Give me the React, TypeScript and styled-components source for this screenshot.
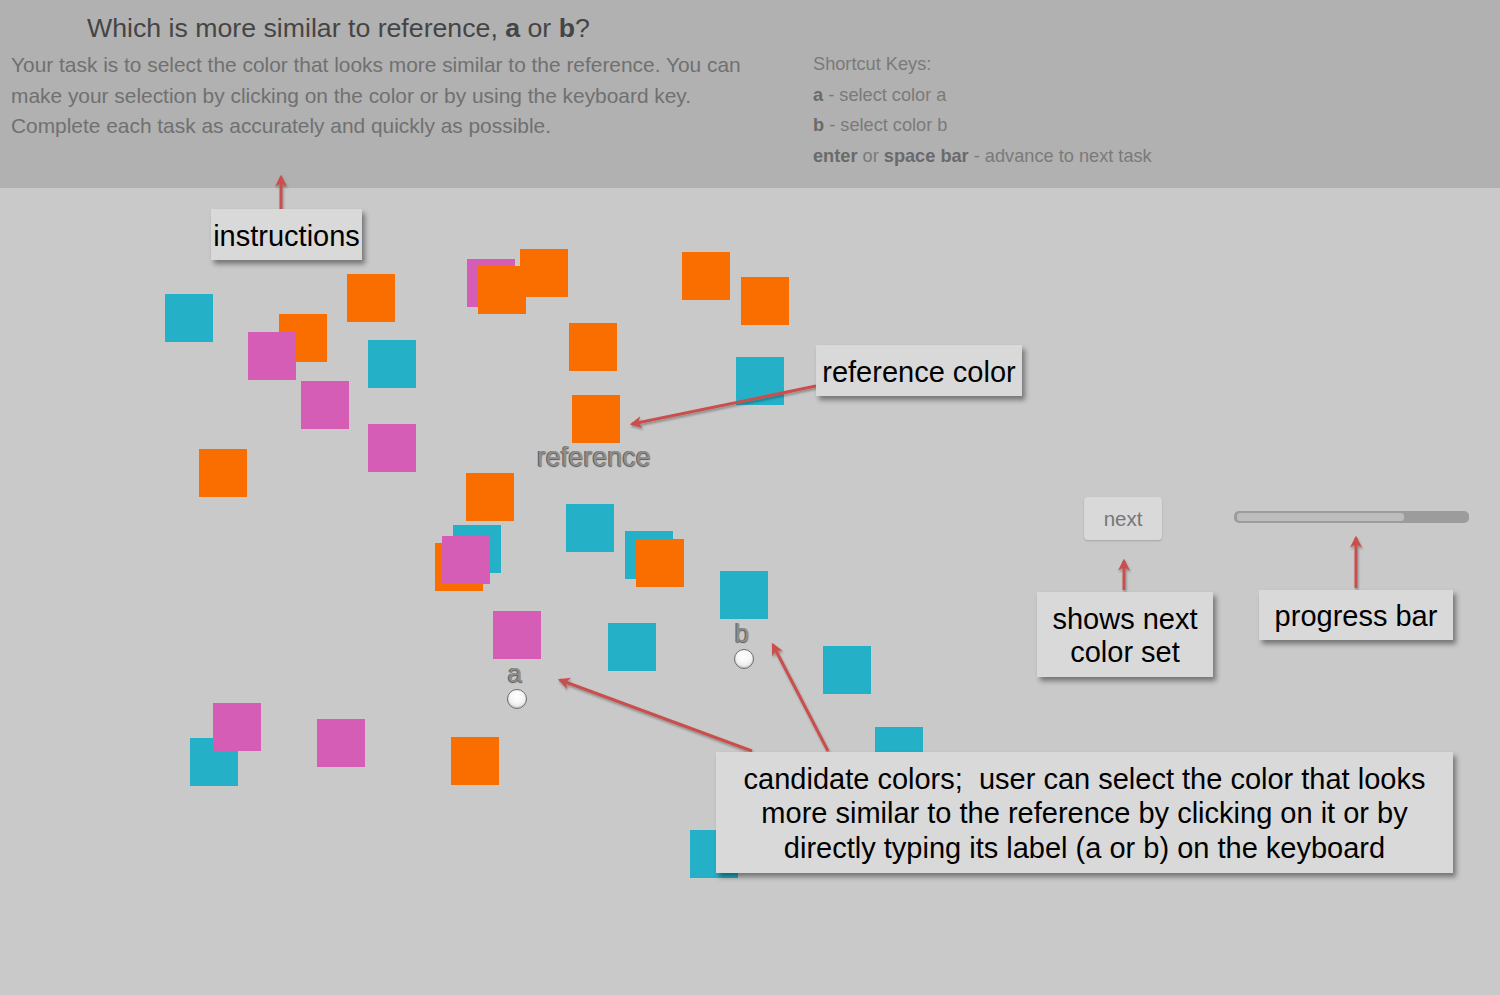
import React from "react";
import styled, { createGlobalStyle } from "styled-components";

const HEADER_H = 188;

const ORANGE = "#fa6e00";
const TEAL = "#24b1c7";
const PINK = "#d65db6";

type Sq = { x: number; y: number; c: string };

const squares: Sq[] = [
  { x: 165, y: 294, c: TEAL },
  { x: 279, y: 314, c: ORANGE },
  { x: 248, y: 332, c: PINK },
  { x: 347, y: 274, c: ORANGE },
  { x: 368, y: 340, c: TEAL },
  { x: 301, y: 381, c: PINK },
  { x: 368, y: 424, c: PINK },
  { x: 199, y: 449, c: ORANGE },
  { x: 467, y: 259, c: PINK },
  { x: 520, y: 249, c: ORANGE },
  { x: 478, y: 266, c: ORANGE },
  { x: 682, y: 252, c: ORANGE },
  { x: 741, y: 277, c: ORANGE },
  { x: 569, y: 323, c: ORANGE },
  { x: 736, y: 357, c: TEAL },
  { x: 466, y: 473, c: ORANGE },
  { x: 453, y: 525, c: TEAL },
  { x: 435, y: 543, c: ORANGE },
  { x: 442, y: 536, c: PINK },
  { x: 566, y: 504, c: TEAL },
  { x: 625, y: 531, c: TEAL },
  { x: 636, y: 539, c: ORANGE },
  { x: 608, y: 623, c: TEAL },
  { x: 823, y: 646, c: TEAL },
  { x: 190, y: 738, c: TEAL },
  { x: 213, y: 703, c: PINK },
  { x: 317, y: 719, c: PINK },
  { x: 451, y: 737, c: ORANGE },
  { x: 875, y: 727, c: TEAL },
  { x: 690, y: 830, c: TEAL },
];

type Choice = { x: number; y: number; c: string; label: string; size: number; radio: boolean };

const choices: Choice[] = [
  { x: 572, y: 395, c: ORANGE, label: "reference", size: 27, radio: false },
  { x: 493, y: 611, c: PINK, label: "a", size: 26, radio: true },
  { x: 720, y: 571, c: TEAL, label: "b", size: 26, radio: true },
];

const GlobalStyle = createGlobalStyle`
  html, body { margin: 0; padding: 0; background: #c9c9c9; }
  body { font-family: "Liberation Sans", Arial, Helvetica, sans-serif; }
`;

const Page = styled.div`
  position: relative;
  width: 1500px;
  height: 995px;
  overflow: hidden;
  background: #c9c9c9;
`;

const Header = styled.header`
  box-sizing: border-box;
  height: ${HEADER_H}px;
  background: #b1b1b1;
  display: flex;
  padding: 10px 0 0 11px;
`;

const Intro = styled.div`
  width: 802px;
  flex: none;
`;

const Title = styled.h1`
  margin: 0;
  padding-left: 76px;
  font-size: 26.7px;
  line-height: 36px;
  font-weight: normal;
  color: #454545;
  b { font-weight: bold; }
`;

const Description = styled.p`
  margin: 4px 0 0;
  font-size: 20.9px;
  line-height: 30.5px;
  color: #707070;
`;

const Shortcuts = styled.div`
  padding-top: 39px;
  font-size: 18.2px;
  line-height: 30.5px;
  color: #7a7a7a;
  b { font-weight: bold; color: #6a6a6a; }
`;

const ShortcutLine = styled.div``;

const Stage = styled.main`
  position: relative;
  height: ${995 - HEADER_H}px;
`;

const Square = styled.div<{ $c: string }>`
  position: absolute;
  width: 48px;
  height: 48px;
  background: ${(p) => p.$c};
`;

const ChoiceGroup = styled.div`
  position: absolute;
  width: 48px;
  display: flex;
  flex-direction: column;
  align-items: center;
`;

const Swatch = styled.div<{ $c: string }>`
  width: 48px;
  height: 48px;
  flex: none;
  background: ${(p) => p.$c};
`;

const ColorLabel = styled.div<{ $size: number }>`
  margin-top: 1px;
  margin-right: 4px;
  white-space: nowrap;
  font-size: ${(p) => p.$size}px;
  line-height: 1;
  color: #8e8e8e;
  text-shadow: -1px 0 0 #5c5c5c, 0 1px 1px #5a5a5a;
`;

const Radio = styled.span`
  box-sizing: border-box;
  width: 20px;
  height: 20px;
  margin-top: 3px;
  border-radius: 50%;
  border: 1px solid #6d6d6d;
  background: radial-gradient(circle at 50% 35%, #ffffff 0%, #f6f6f6 45%, #d4d4d4 100%);
  box-shadow: inset 0 -1px 1px rgba(0, 0, 0, 0.15);
`;

const Controls = styled.div`
  position: absolute;
  left: 1084px;
  top: ${497 - HEADER_H}px;
  display: flex;
  align-items: center;
  gap: 72px;
`;

const NextButton = styled.div`
  width: 78px;
  height: 43px;
  border-radius: 4px;
  background: #d9d9d9;
  box-shadow: 0 1px 2px rgba(0, 0, 0, 0.18);
  display: flex;
  align-items: center;
  justify-content: center;
  font-size: 20.5px;
  color: #767676;
`;

const Progress = styled.div`
  box-sizing: border-box;
  width: 235px;
  height: 12px;
  border-radius: 5px;
  background: #9c9c9c;
  padding: 2px 3px;
  margin-top: -3px;
`;

const ProgressFill = styled.div`
  height: 8px;
  border-radius: 3px;
  background: #bdbdbd;
`;

const Overlay = styled.div`
  position: absolute;
  inset: 0;
  pointer-events: none;
`;

const ArrowLayer = styled.svg`
  position: absolute;
  left: 0;
  top: 0;
`;

const Callout = styled.div<{ $x: number; $y: number; $w: number; $h: number; $lh?: number }>`
  position: absolute;
  left: ${(p) => p.$x}px;
  top: ${(p) => p.$y}px;
  width: ${(p) => p.$w}px;
  height: ${(p) => p.$h}px;
  box-sizing: border-box;
  padding-top: 2px;
  background: #d9d9d9;
  box-shadow: 3px 4px 5px rgba(0, 0, 0, 0.42);
  display: flex;
  align-items: center;
  justify-content: center;
  text-align: center;
  font-size: 29px;
  line-height: ${(p) => p.$lh ?? 34}px;
  color: #000;
  white-space: nowrap;
`;

const arrows: [number, number, number, number][] = [
  [281, 209, 281, 177],
  [816, 386, 632, 424],
  [1124, 590, 1124, 561],
  [1356, 588, 1356, 538],
  [752, 751, 560, 680],
  [828, 751, 773, 645],
];

export default function App() {
  return (
    <Page>
      <GlobalStyle />
      <Header>
        <Intro>
          <Title>
            Which is more similar to reference, <b>a</b> or <b>b</b>?
          </Title>
          <Description>
            Your task is to select the color that looks more similar to the reference. You can
            <br />
            make your selection by clicking on the color or by using the keyboard key.
            <br />
            Complete each task as accurately and quickly as possible.
          </Description>
        </Intro>
        <Shortcuts>
          <ShortcutLine>Shortcut Keys:</ShortcutLine>
          <ShortcutLine>
            <b>a</b> - select color a
          </ShortcutLine>
          <ShortcutLine>
            <b>b</b> - select color b
          </ShortcutLine>
          <ShortcutLine>
            <b>enter</b> or <b>space bar</b> - advance to next task
          </ShortcutLine>
        </Shortcuts>
      </Header>
      <Stage>
        {squares.map((s, i) => (
          <Square key={i} $c={s.c} style={{ left: s.x, top: s.y - HEADER_H }} />
        ))}
        {choices.map((ch) => (
          <ChoiceGroup key={ch.label} style={{ left: ch.x, top: ch.y - HEADER_H }}>
            <Swatch $c={ch.c} />
            <ColorLabel $size={ch.size}>{ch.label}</ColorLabel>
            {ch.radio && <Radio />}
          </ChoiceGroup>
        ))}
        <Controls>
          <NextButton>next</NextButton>
          <Progress>
            <ProgressFill style={{ width: "73%" }} />
          </Progress>
        </Controls>
      </Stage>
      <Overlay>
        <ArrowLayer width={1500} height={995} viewBox="0 0 1500 995">
          <defs>
            <marker
              id="head"
              viewBox="0 0 10 10"
              refX="8"
              refY="5"
              markerWidth="4"
              markerHeight="4"
              orient="auto"
              markerUnits="strokeWidth"
            >
              <path d="M0,0 L10,5 L0,10 L2.5,5 z" fill="#c9504e" />
            </marker>
            <filter id="shadow" x="-20%" y="-20%" width="140%" height="140%">
              <feDropShadow dx="1" dy="2" stdDeviation="1.2" floodColor="#000" floodOpacity="0.3" />
            </filter>
          </defs>
          <g filter="url(#shadow)">
            {arrows.map(([x1, y1, x2, y2], i) => (
              <line
                key={i}
                x1={x1}
                y1={y1}
                x2={x2}
                y2={y2}
                stroke="#c9504e"
                strokeWidth={3}
                markerEnd="url(#head)"
              />
            ))}
          </g>
        </ArrowLayer>
        <Callout $x={211} $y={209} $w={151} $h={51}>
          instructions
        </Callout>
        <Callout $x={816} $y={345} $w={206} $h={51}>
          reference color
        </Callout>
        <Callout $x={1037} $y={592} $w={176} $h={85} $lh={33}>
          shows next
          <br />
          color set
        </Callout>
        <Callout $x={1259} $y={590} $w={194} $h={50}>
          progress bar
        </Callout>
        <Callout $x={716} $y={752} $w={737} $h={121} $lh={34.5}>
          candidate colors;&nbsp; user can select the color that looks
          <br />
          more similar to the reference by clicking on it or by
          <br />
          directly typing its label (a or b) on the keyboard
        </Callout>
      </Overlay>
    </Page>
  );
}
